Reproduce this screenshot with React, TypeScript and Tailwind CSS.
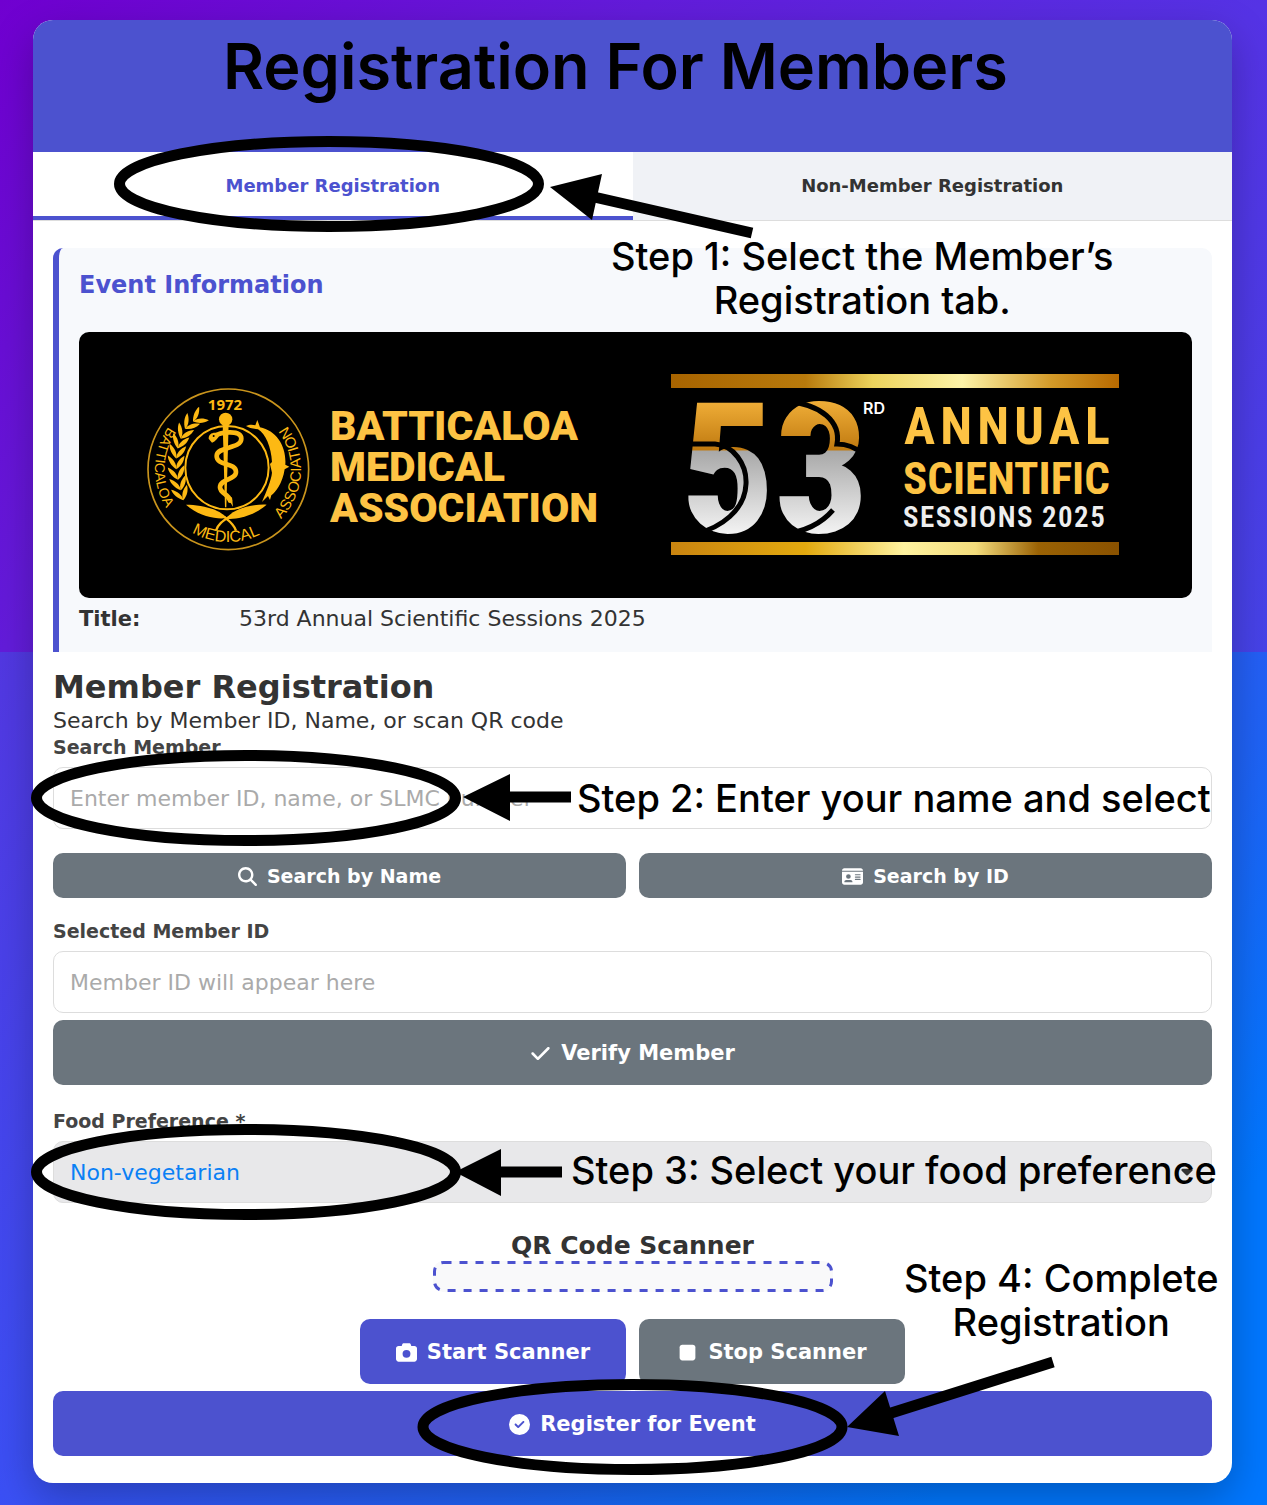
import { useState } from 'react'
import type { ReactNode } from 'react'
import { FaCamera, FaCaretDown, FaCheck, FaCircleCheck, FaIdCard, FaMagnifyingGlass, FaStop } from 'react-icons/fa6'

const label = 'block text-[19px] leading-6 font-bold text-[#444]'
const field = 'block w-full h-[62px] px-4 rounded-[10px] border border-[#ddd] bg-white text-[22px] placeholder-[#aaa] outline-none'
const button = 'flex items-center justify-center gap-[10px] rounded-[10px] pt-0.5 font-bold text-white'

// wheat leaves on the left side of the emblem: x, y, angle
const leaves = [
  [208, 140, -52], [180, 158, -38], [162, 184, -24], [149, 212, -14],
  [141, 242, -6], [138, 274, 2], [140, 306, 10], [146, 338, 16], [152, 368, 20],
]

function Emblem() {
  return (
    <g>
      <g transform="translate(51 38) scale(0.3333)" fill="#fdb913" stroke="none">
        <circle cx="295" cy="298" r="241" fill="none" stroke="#c9941c" strokeWidth="5" />
        <circle cx="291" cy="293" r="125" fill="none" stroke="#fdb913" strokeWidth="6" />

        {/* wheat */}
        {leaves.map(([x, y, a]) => (
          <g key={y} transform={`translate(${x} ${y}) rotate(${-a})`}>
            <path d="M0 24 C2 8 -8 -8 -24 -18 C-24 -2 -14 14 0 24Z" />
            <path d="M0 24 C-2 8 10 -8 26 -16 C24 2 16 14 0 24Z" />
          </g>
        ))}

        {/* staff and snake */}
        <circle cx="287" cy="148" r="20" />
        <path d="M278 160 H296 L289 412 H285 Z" />
        <path
          d="M252 200 C272 184 334 180 334 206 C334 238 260 228 260 258 C260 290 318 276 318 306 C318 330 270 326 270 352 C270 372 296 370 300 392"
          fill="none" stroke="#fdb913" strokeWidth="14" strokeLinecap="round"
        />
        <path d="M293 384 L306 382 L309 410Z" />
        <path d="M236 206 C236 190 252 184 270 192 C264 206 256 214 246 218 Z" />
        <circle cx="251" cy="198" r="3" fill="#000" />

        {/* fish */}
        <path d="M348 168 C360 162 370 164 376 166 L382 150 L390 172 C440 182 470 230 466 284 L478 290 L464 298 C458 340 436 368 424 376 L420 390 L414 378 L396 396 C410 362 424 330 426 308 L420 282 L426 276 C424 232 406 190 384 178 C370 176 356 174 348 168Z" />

        {/* crossed leaves */}
        <path d="M168 404 C210 404 268 416 290 444 C262 450 204 438 168 404Z" />
        <path d="M410 404 C368 402 312 414 288 446 C318 450 372 438 410 404Z" />
        <path d="M282 440 C296 452 312 462 318 482 M298 440 C280 452 264 462 258 482" fill="none" stroke="#fdb913" strokeWidth="7" />
      </g>

      <path id="ring" d="M149 64 A73 73 0 0 0 149 210 A73 73 0 0 0 149 64" fill="none" />
      <g fill="#fdb913" textAnchor="middle" className="font-['Liberation_Sans',sans-serif]">
        <text className="text-[14px]"><textPath href="#ring" startOffset="24.6%">BATTICALOA</textPath></text>
        <text className="text-[16px]"><textPath href="#ring" startOffset="49.5%">MEDICAL</textPath></text>
        <text className="text-[15px]"><textPath href="#ring" startOffset="74%">ASSOCIATION</textPath></text>
        <text x="146" y="78" className="text-[15px] font-bold font-['Open_Sans',sans-serif]">1972</text>
      </g>
    </g>
  )
}

function EventBanner() {
  return (
    <svg viewBox="0 0 1113 266" className="block w-full rounded-[10px] bg-black" role="img" aria-label="Batticaloa Medical Association">
      <defs>
        <linearGradient id="barTop">
          <stop offset="0" stopColor="#a86400" />
          <stop offset="0.3" stopColor="#b87a0c" />
          <stop offset="0.45" stopColor="#ecd35c" />
          <stop offset="0.65" stopColor="#fdf3a8" />
          <stop offset="0.85" stopColor="#d39a28" />
          <stop offset="1" stopColor="#b86a00" />
        </linearGradient>
        <linearGradient id="barBottom">
          <stop offset="0" stopColor="#c98410" />
          <stop offset="0.3" stopColor="#e2a90f" />
          <stop offset="0.52" stopColor="#fff3a0" />
          <stop offset="0.68" stopColor="#f3dc7c" />
          <stop offset="0.82" stopColor="#9a6204" />
          <stop offset="1" stopColor="#8a5200" />
        </linearGradient>
        <linearGradient id="digits" gradientUnits="userSpaceOnUse" x1="0" y1="69" x2="0" y2="201">
          <stop offset="0" stopColor="#f0ae38" />
          <stop offset="0.37" stopColor="#c07a10" />
          <stop offset="0.38" stopColor="#a8a8a8" />
          <stop offset="0.7" stopColor="#cfcfcf" />
          <stop offset="1" stopColor="#f2f2f2" />
        </linearGradient>
      </defs>

      <Emblem />

      <g fill="#fdc344" className="text-[41px] font-black font-['Roboto',sans-serif]">
        <text x="251" y="108">BATTICALOA</text>
        <text x="251" y="149">MEDICAL</text>
        <text x="251" y="190">ASSOCIATION</text>
      </g>

      <rect x="592" y="42" width="448" height="14" fill="url(#barTop)" />
      <rect x="592" y="210" width="448" height="13" fill="url(#barBottom)" />

      <text x="603" y="200" fill="url(#digits)" className="text-[182px] font-black font-['Roboto_Condensed',sans-serif]">53</text>
      <path d="M606 112 H636 C654 113 668 132 667 152 C666 178 642 196 616 202" fill="none" stroke="#000" strokeWidth="5" />
      <path d="M709 70 C742 72 762 90 758 112 C768 112 776 115 784 122" fill="none" stroke="#000" strokeWidth="5" />
      <path d="M754 178 C742 192 724 200 704 202" fill="none" stroke="#000" strokeWidth="5" />

      <text x="784" y="82" fill="#fff" className="text-[16px] font-semibold font-['Inter',sans-serif]">RD</text>
      <g className="font-['Roboto_Condensed',sans-serif]">
        <text x="825" y="112" fill="#fdc344" className="text-[52px] font-bold tracking-widest">ANNUAL</text>
        <text x="824" y="162" fill="#fdc344" className="text-[45px] font-bold">SCIENTIFIC</text>
        <text x="824" y="195" fill="#eee" className="text-[29px] font-semibold tracking-wider">SESSIONS 2025</text>
      </g>
    </svg>
  )
}

function Note({ className, children }: { className: string; children: ReactNode }) {
  return (
    <p className={`absolute whitespace-nowrap text-center text-[38px] leading-[44px] font-medium text-black font-['Inter',sans-serif] ${className}`}>
      {children}
    </p>
  )
}

// hand-placed guide marks on top of the form
function Guide() {
  return (
    <div className="absolute inset-0 pointer-events-none">
      <svg className="absolute inset-0 w-full h-full">
        <g fill="none" stroke="#000" strokeWidth="11">
          <ellipse cx="329" cy="184" rx="209.5" ry="42.5" />
          <ellipse cx="246" cy="798" rx="209.5" ry="42.5" />
          <ellipse cx="246" cy="1172" rx="209.5" ry="42.5" />
          <ellipse cx="632.5" cy="1427" rx="209.5" ry="42.5" />
          <path d="M594 197 L752 233 M508 797 H571 M500 1172 H562 M888 1414 L1053 1362" />
        </g>
        <path d="M550 187 L602 174 L592 220Z M463 797 L510 774 V821Z M455 1172 L501 1149 V1196Z M847 1427 L885 1391 L899 1436Z" />
      </svg>
      <Note className="left-[611px] top-[234px]">Step 1: Select the Member’s<br />Registration tab.</Note>
      <Note className="left-[577px] top-[776px]">Step 2: Enter your name and select</Note>
      <Note className="left-[571px] top-[1148px]">Step 3: Select your food preference</Note>
      <Note className="left-[904px] top-[1256px]">Step 4: Complete<br />Registration</Note>
    </div>
  )
}

export default function App() {
  const [tab, setTab] = useState<'member' | 'guest'>('member')
  const [query, setQuery] = useState('')
  const [food, setFood] = useState('Non-vegetarian')

  const tabClass = (active: boolean) =>
    active
      ? 'flex-1 h-[68px] pt-0.5 border-b-4 border-[#4c52cf] bg-white text-[#4c52cf] font-bold'
      : 'flex-1 h-[68px] pb-0.5 bg-[#f0f2f6] text-[#333] font-bold'

  return (
    <div className="relative min-h-screen overflow-hidden bg-[linear-gradient(135deg,#5535e0_20%,#3b50f5_54%,#1f62f5_72%,#0077ff_88%)] pl-[33px] pt-5 pb-[22px] pr-[35px] text-[#333] font-['DejaVu_Sans',Verdana,sans-serif]">
      <div className="absolute inset-x-0 top-0 h-[652px] bg-[linear-gradient(135deg,#7000d0_0%,#631cdb_34%,#5533e5_66%,#4643e8_100%)]" />

      <main className="relative overflow-hidden rounded-[20px] bg-white shadow-[0_15px_40px_rgba(0,0,0,0.25)]">
        <header className="bg-[#4c52cf] pt-2 pb-12 pr-[34px]">
          <h1 className="text-center text-[63px] leading-[76px] font-semibold text-black font-['Inter',sans-serif]">Registration For Members</h1>
        </header>

        <div className="flex border-b border-[#ddd] text-[18px]">
          <button className={tabClass(tab === 'member')} onClick={() => setTab('member')}>Member Registration</button>
          <button className={tabClass(tab === 'guest')} onClick={() => setTab('guest')}>Non-Member Registration</button>
        </div>

        <div className="px-5 pt-[27px] pb-[27px]">
          <section className="rounded-t-[10px] border-l-6 border-[#4c52cf] bg-[#f7f9fc] px-5 pt-[21px] pb-[17px]">
            <h3 className="mb-[31px] text-2xl font-bold text-[#4c52cf]">Event Information</h3>
            <EventBanner />
            <div className="mt-[5px] flex text-[22px] leading-8">
              <span className="w-40 font-bold text-[21px]">Title:</span>
              <span>53rd Annual Scientific Sessions 2025</span>
            </div>
          </section>

          <h2 className="mt-[15px] text-[32px] leading-10 font-bold">Member Registration</h2>
          <p className="text-[22px] leading-7">Search by Member ID, Name, or scan QR code</p>

          <label htmlFor="search" className={label}>Search Member</label>
          <input
            id="search"
            className={`mt-2 ${field}`}
            placeholder="Enter member ID, name, or SLMC number"
            value={query}
            onChange={e => setQuery(e.target.value)}
          />

          <div className="mt-6 grid grid-cols-2 gap-[13px] text-[19px]">
            <button className={`h-[45px] bg-[#6b757d] ${button}`}><FaMagnifyingGlass />Search by Name</button>
            <button className={`h-[45px] bg-[#6b757d] ${button}`}><FaIdCard className="text-[21px]" />Search by ID</button>
          </div>

          <label htmlFor="memberId" className={`mt-[21px] ${label}`}>Selected Member ID</label>
          <input id="memberId" readOnly className={`mt-2 ${field}`} placeholder="Member ID will appear here" />
          <button className={`mt-[7px] h-[65px] w-full bg-[#6b757d] text-[21px] ${button}`}><FaCheck />Verify Member</button>

          <label htmlFor="food" className={`mt-6 ${label}`}>Food Preference *</label>
          <div className="relative mt-2">
            <select
              id="food"
              className="block w-full h-[62px] px-4 rounded-[10px] border border-[#ddd] bg-[#e8e8ea] text-[22px] text-[#0a80f5] appearance-none outline-none"
              value={food}
              onChange={e => setFood(e.target.value)}
            >
              <option>Non-vegetarian</option>
              <option>Vegetarian</option>
            </select>
            <FaCaretDown className="absolute right-4 top-[21px] text-[18px] text-[#333]" />
          </div>

          <h3 className="mt-[29px] text-center text-[25px] leading-7 font-bold">QR Code Scanner</h3>
          <div className="mx-auto mt-px h-[31px] w-[400px] rounded-[10px] bg-[#f9f9fa]">
            <svg className="block w-full h-full" fill="none" stroke="#4c52cf" strokeWidth="3" strokeDasharray="8 8">
              <rect x="1.5" y="1.5" width="397" height="28" rx="9" />
            </svg>
          </div>

          <div className="mt-[27px] flex justify-center gap-[13px] text-[21px]">
            <button className={`h-[65px] w-[266px] bg-[#4c52cf] ${button}`}><FaCamera />Start Scanner</button>
            <button className={`h-[65px] w-[266px] bg-[#6b757d] ${button}`}><FaStop />Stop Scanner</button>
          </div>
          <button className={`mt-[7px] h-[65px] w-full bg-[#4c52cf] text-[21px] ${button}`}><FaCircleCheck />Register for Event</button>
        </div>
      </main>

      <Guide />
    </div>
  )
}
